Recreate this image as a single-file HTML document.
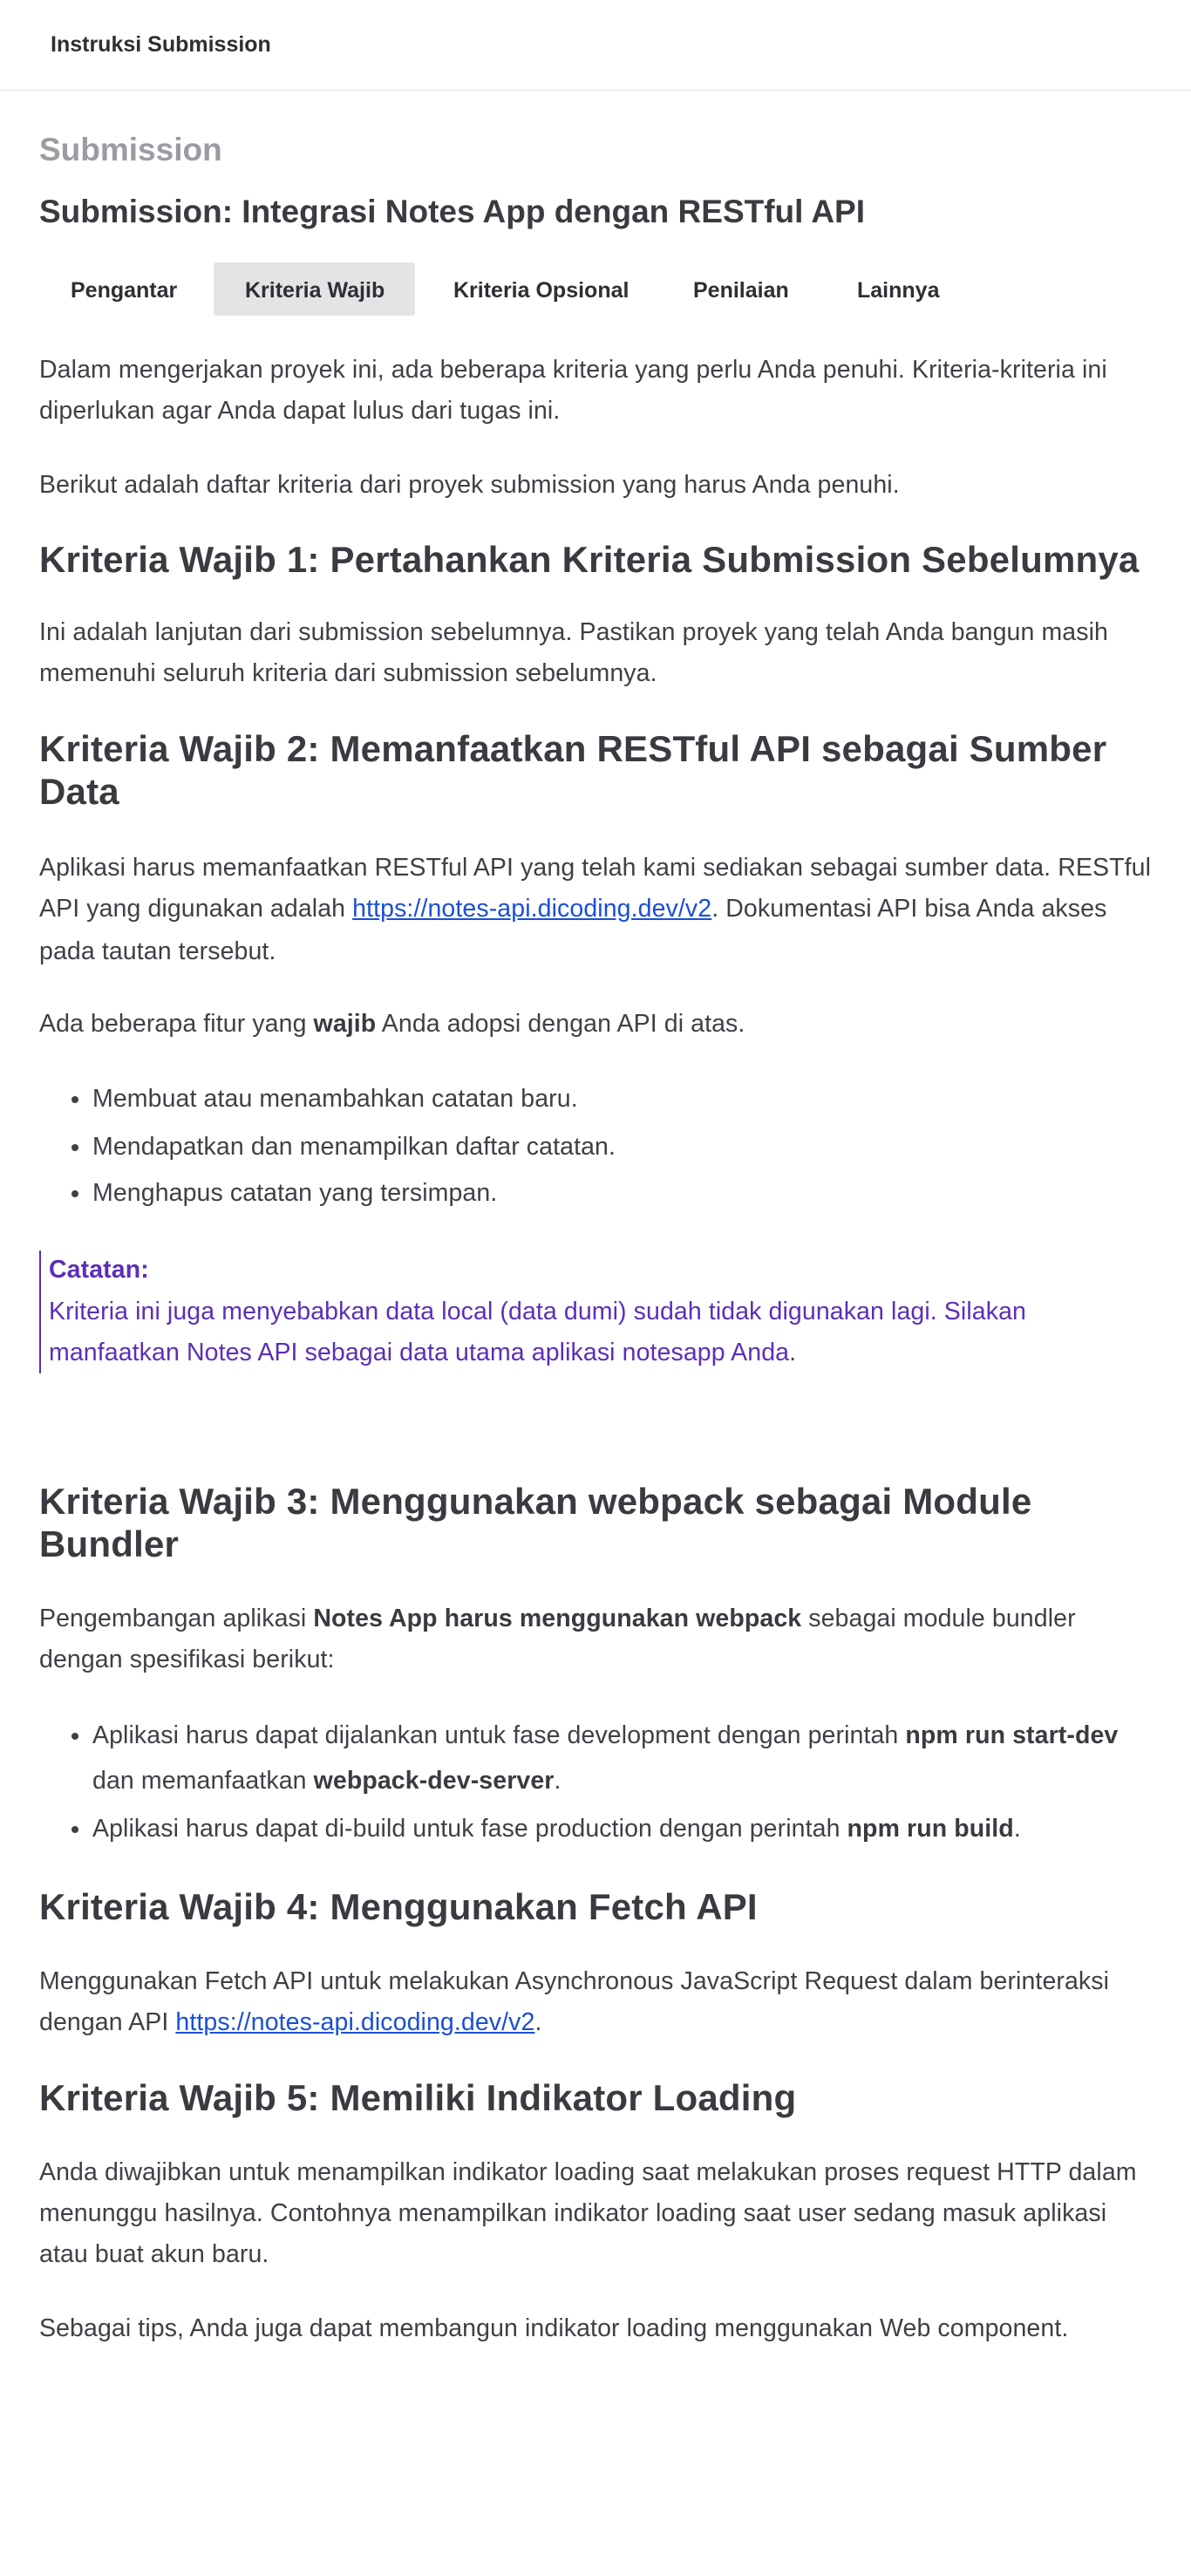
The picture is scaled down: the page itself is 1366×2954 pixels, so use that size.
<!DOCTYPE html>
<html><head><meta charset="utf-8">
<style>
*{margin:0;padding:0;box-sizing:border-box}
body{width:1366px;height:2954px;background:#fff;position:relative;font-family:"Liberation Sans",Arial,sans-serif;color:#3f3f46;overflow:hidden}
.w{position:absolute;left:0;top:2px;width:1366px;height:2952px}
.a{position:absolute;left:45px;white-space:nowrap}
.p{font-size:28.5px;line-height:48px;height:48px;letter-spacing:0.1px}
.h{font-size:42px;font-weight:bold;color:#3a3a40;line-height:49px;height:49px;letter-spacing:0.2px}
b{font-weight:bold;color:#3a3a40}
a{color:#1a4fd6;text-decoration:underline}
.li{position:absolute;left:106px;font-size:28.5px;line-height:48px;height:48px;white-space:nowrap;letter-spacing:0.1px}
.li:before{content:"";position:absolute;left:-24px;top:21px;width:8px;height:8px;border-radius:50%;background:#3f3f46}
.tab{position:absolute;top:301px;height:61px;line-height:61px;font-size:25px;font-weight:bold;color:#2e2e33}
.c{color:#5b2fb8}
</style></head><body>
<div style="position:absolute;left:58px;top:36px;font-size:25px;font-weight:bold;color:#2e2e33;line-height:30px">Instruksi Submission</div>
<div style="position:absolute;left:0;top:103px;width:1366px;height:1px;background:#e5e5e8"></div>
<div class="w">
<div class="a" style="top:148px;font-size:37px;font-weight:bold;color:#9b9ba2;line-height:44px">Submission</div>
<div class="a" style="top:219px;font-size:37px;font-weight:bold;color:#3a3a40;line-height:44px">Submission: Integrasi Notes App dengan RESTful API</div>
<div style="position:absolute;left:245px;top:299px;width:231px;height:61px;background:#e4e4e7;border-radius:3px"></div>
<div class="tab" style="left:81px">Pengantar</div>
<div class="tab" style="left:281px">Kriteria Wajib</div>
<div class="tab" style="left:520px">Kriteria Opsional</div>
<div class="tab" style="left:795px">Penilaian</div>
<div class="tab" style="left:983px">Lainnya</div>

<div class="a p" style="top:398px">Dalam mengerjakan proyek ini, ada beberapa kriteria yang perlu Anda penuhi. Kriteria-kriteria ini</div>
<div class="a p" style="top:445px">diperlukan agar Anda dapat lulus dari tugas ini.</div>
<div class="a p" style="top:530px">Berikut adalah daftar kriteria dari proyek submission yang harus Anda penuhi.</div>

<div class="a h" style="top:615px">Kriteria Wajib 1: Pertahankan Kriteria Submission Sebelumnya</div>
<div class="a p" style="top:699px">Ini adalah lanjutan dari submission sebelumnya. Pastikan proyek yang telah Anda bangun masih</div>
<div class="a p" style="top:746px">memenuhi seluruh kriteria dari submission sebelumnya.</div>

<div class="a h" style="top:832px">Kriteria Wajib 2: Memanfaatkan RESTful API sebagai Sumber</div>
<div class="a h" style="top:881px">Data</div>
<div class="a p" style="top:969px">Aplikasi harus memanfaatkan RESTful API yang telah kami sediakan sebagai sumber data. RESTful</div>
<div class="a p" style="top:1016px">API yang digunakan adalah <a>https://notes-api.dicoding.dev/v2</a>. Dokumentasi API bisa Anda akses</div>
<div class="a p" style="top:1065px">pada tautan tersebut.</div>
<div class="a p" style="top:1148px">Ada beberapa fitur yang <b>wajib</b> Anda adopsi dengan API di atas.</div>
<div class="li" style="top:1234px">Membuat atau menambahkan catatan baru.</div>
<div class="li" style="top:1289px">Mendapatkan dan menampilkan daftar catatan.</div>
<div class="li" style="top:1342px">Menghapus catatan yang tersimpan.</div>

<div style="position:absolute;left:45px;top:1432px;width:2px;height:141px;background:#5b2fb8"></div>
<div class="a p c" style="left:56px;top:1430px;font-weight:bold">Catatan:</div>
<div class="a p c" style="left:56px;top:1478px">Kriteria ini juga menyebabkan data local (data dumi) sudah tidak digunakan lagi. Silakan</div>
<div class="a p c" style="left:56px;top:1525px">manfaatkan Notes API sebagai data utama aplikasi notesapp Anda<span style="color:#3f3f46">.</span></div>

<div class="a h" style="top:1695px">Kriteria Wajib 3: Menggunakan webpack sebagai Module</div>
<div class="a h" style="top:1744px">Bundler</div>
<div class="a p" style="top:1830px">Pengembangan aplikasi <b>Notes App harus menggunakan webpack</b> sebagai module bundler</div>
<div class="a p" style="top:1877px">dengan spesifikasi berikut:</div>
<div class="li" style="top:1964px">Aplikasi harus dapat dijalankan untuk fase development dengan perintah <b>npm run start-dev</b></div>
<div style="position:absolute;left:106px;top:2016px;font-size:28.5px;line-height:48px;white-space:nowrap;letter-spacing:0.1px">dan memanfaatkan <b>webpack-dev-server</b>.</div>
<div class="li" style="top:2071px">Aplikasi harus dapat di-build untuk fase production dengan perintah <b>npm run build</b>.</div>

<div class="a h" style="top:2160px">Kriteria Wajib 4: Menggunakan Fetch API</div>
<div class="a p" style="top:2246px">Menggunakan Fetch API untuk melakukan Asynchronous JavaScript Request dalam berinteraksi</div>
<div class="a p" style="top:2293px">dengan API <a>https://notes-api.dicoding.dev/v2</a>.</div>

<div class="a h" style="top:2379px">Kriteria Wajib 5: Memiliki Indikator Loading</div>
<div class="a p" style="top:2465px">Anda diwajibkan untuk menampilkan indikator loading saat melakukan proses request HTTP dalam</div>
<div class="a p" style="top:2512px">menunggu hasilnya. Contohnya menampilkan indikator loading saat user sedang masuk aplikasi</div>
<div class="a p" style="top:2559px">atau buat akun baru.</div>
<div class="a p" style="top:2644px">Sebagai tips, Anda juga dapat membangun indikator loading menggunakan Web component.</div>
</div>
</body></html>
